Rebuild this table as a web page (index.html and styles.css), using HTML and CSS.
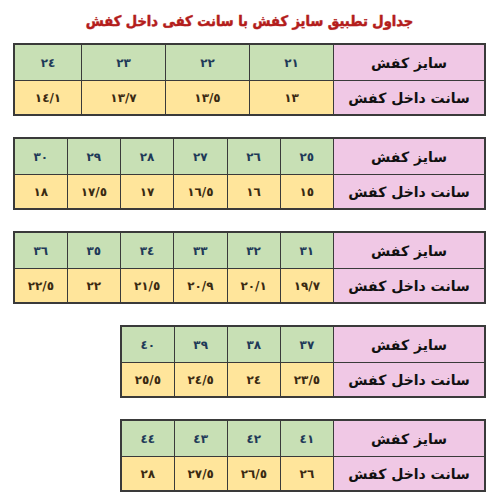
FILE: index.html
```html
<!DOCTYPE html>
<html lang="fa" dir="rtl">
<head>
<meta charset="utf-8">
<link rel="stylesheet" href="styles.css">
</head>
<body>
<main class="page">
  <h1 class="title">جداول تطبیق سایز کفش با سانت کفی داخل کفش</h1>

  <table class="chart wide">
    <tr class="size">
      <th class="label">سایز کفش</th>
      <td class="c83">٢١</td><td class="c83">٢٢</td><td class="c83">٢٣</td><td>٢٤</td>
    </tr>
    <tr class="cm">
      <th class="label">سانت داخل کفش</th>
      <td>١٣</td><td>١٣/٥</td><td>١٣/٧</td><td>١٤/١</td>
    </tr>
  </table>

  <table class="chart wide">
    <tr class="size">
      <th class="label">سایز کفش</th>
      <td>٢٥</td><td>٢٦</td><td>٢٧</td><td>٢٨</td><td>٢٩</td><td>٣٠</td>
    </tr>
    <tr class="cm">
      <th class="label">سانت داخل کفش</th>
      <td>١٥</td><td>١٦</td><td>١٦/٥</td><td>١٧</td><td>١٧/٥</td><td>١٨</td>
    </tr>
  </table>

  <table class="chart wide">
    <tr class="size">
      <th class="label">سایز کفش</th>
      <td>٣١</td><td>٣٢</td><td>٣٣</td><td>٣٤</td><td>٣٥</td><td>٣٦</td>
    </tr>
    <tr class="cm">
      <th class="label">سانت داخل کفش</th>
      <td>١٩/٧</td><td>٢٠/١</td><td>٢٠/٩</td><td>٢١/٥</td><td>٢٢</td><td>٢٢/٥</td>
    </tr>
  </table>

  <table class="chart narrow">
    <tr class="size">
      <th class="label">سایز کفش</th>
      <td>٣٧</td><td>٣٨</td><td>٣٩</td><td>٤٠</td>
    </tr>
    <tr class="cm">
      <th class="label">سانت داخل کفش</th>
      <td>٢٣/٥</td><td>٢٤</td><td>٢٤/٥</td><td>٢٥/٥</td>
    </tr>
  </table>

  <table class="chart narrow">
    <tr class="size">
      <th class="label">سایز کفش</th>
      <td>٤١</td><td>٤٢</td><td>٤٣</td><td>٤٤</td>
    </tr>
    <tr class="cm">
      <th class="label">سانت داخل کفش</th>
      <td>٢٦</td><td>٢٦/٥</td><td>٢٧/٥</td><td>٢٨</td>
    </tr>
  </table>
</main>
</body>
</html>
```

FILE: styles.css
```css
html, body {
  margin: 0;
  padding: 0;
  background: #ffffff;
}

body {
  width: 500px;
  height: 500px;
  overflow: hidden;
  font-family: "DejaVu Sans", "Noto Sans", sans-serif;
}

.page {
  display: flex;
  flex-direction: column;
  align-items: flex-start;
  gap: 21px;
  padding: 9px 14px 0 13px;
}

.title {
  align-self: stretch;
  margin: 0 0 -11px 0;
  text-align: center;
  font-family: "DejaVu Sans Condensed", "DejaVu Sans", sans-serif;
  font-size: 14.5px;
  line-height: 24px;
  font-weight: bold;
  color: #b41d1c;
  -webkit-text-stroke: 0.35px #b41d1c;
  text-shadow: 0 0 1px rgba(180, 29, 28, 0.4);
}

.chart {
  border-collapse: collapse;
  table-layout: fixed;
  border: 2px solid #3a3a3a;
}

.chart.wide { width: 473px; }
.chart.narrow { width: 366px; }

.chart th,
.chart td {
  border: 1.5px solid #3a3a3a;
  padding: 0;
  text-align: center;
  vertical-align: middle;
}

.chart .label {
  width: 150px;
  background: #f0c8e5;
  color: #111111;
  font-size: 14px;
  font-weight: bold;
}

.chart .c83 { width: 83px; }

.chart td {
  font-size: 12px;
  font-weight: bold;
}

.size td,
.size th { height: 35px; }

.cm td,
.cm th { height: 33px; }

.size td {
  background: #c8e0b5;
  color: #1f3a58;
}

.cm td {
  background: #ffe59b;
  color: #3a2a12;
}
```
